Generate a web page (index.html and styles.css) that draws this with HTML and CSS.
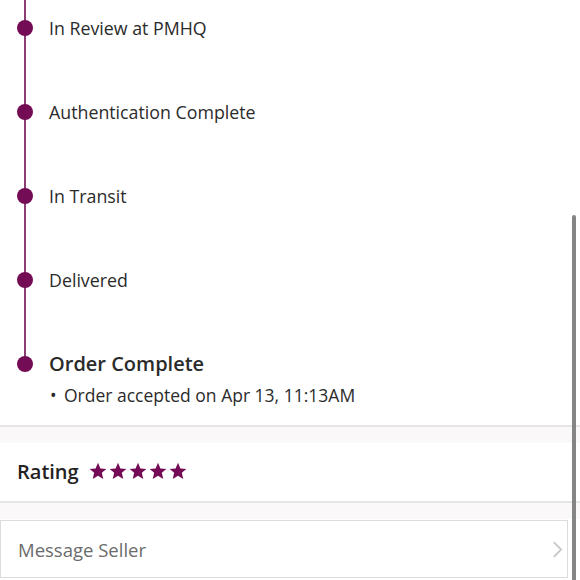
FILE: index.html
```html
<!DOCTYPE html>
<html lang="en">
<head>
  <meta charset="UTF-8">
  <meta name="viewport" content="width=device-width, initial-scale=1.0">
  <title>Order Status</title>
  <link rel="stylesheet" href="styles.css">
</head>
<body>
  <!-- Order timeline -->
  <div class="timeline">
    <div class="step">
      <span class="dot"></span>
      <span class="step-label">In Review at PMHQ</span>
    </div>
    <div class="step">
      <span class="dot"></span>
      <span class="step-label">Authentication Complete</span>
    </div>
    <div class="step">
      <span class="dot"></span>
      <span class="step-label">In Transit</span>
    </div>
    <div class="step">
      <span class="dot"></span>
      <span class="step-label">Delivered</span>
    </div>
    <div class="step last">
      <span class="dot"></span>
      <div>
        <span class="step-label current">Order Complete</span>
        <ul class="step-notes">
          <li>Order accepted on Apr 13, 11:13AM</li>
        </ul>
      </div>
    </div>
  </div>

  <div class="band"></div>

  <!-- Rating -->
  <div class="rating">
    <h3>Rating</h3>
    <div class="stars">
      <svg viewBox="0 0 24 24"><path d="M12 2l2.9 6.9 7.1.6-5.4 4.7 1.7 7.3L12 17.6 5.7 21.5l1.7-7.3L2 9.5l7.1-.6z"/></svg>
      <svg viewBox="0 0 24 24"><path d="M12 2l2.9 6.9 7.1.6-5.4 4.7 1.7 7.3L12 17.6 5.7 21.5l1.7-7.3L2 9.5l7.1-.6z"/></svg>
      <svg viewBox="0 0 24 24"><path d="M12 2l2.9 6.9 7.1.6-5.4 4.7 1.7 7.3L12 17.6 5.7 21.5l1.7-7.3L2 9.5l7.1-.6z"/></svg>
      <svg viewBox="0 0 24 24"><path d="M12 2l2.9 6.9 7.1.6-5.4 4.7 1.7 7.3L12 17.6 5.7 21.5l1.7-7.3L2 9.5l7.1-.6z"/></svg>
      <svg viewBox="0 0 24 24"><path d="M12 2l2.9 6.9 7.1.6-5.4 4.7 1.7 7.3L12 17.6 5.7 21.5l1.7-7.3L2 9.5l7.1-.6z"/></svg>
    </div>
  </div>

  <div class="band"></div>

  <!-- Message seller -->
  <a class="message-seller" href="#">
    <span>Message Seller</span>
    <svg class="chevron" viewBox="0 0 12 20"><path d="M2 2l8 8-8 8"/></svg>
  </a>

  <div class="scrollbar"></div>
</body>
</html>
```

FILE: styles.css
```css
* {
  margin: 0;
  padding: 0;
  box-sizing: border-box;
  font-family: "Open Sans", "Liberation Sans", sans-serif;
}

body {
  background-color: #fff;
  color: #2b2b2b;
  overflow: hidden;
  height: 580px;
}

/* Timeline */
.timeline {
  position: relative;
  padding: 16px 0 18px 17px;
  display: flex;
  flex-direction: column;
  gap: 60px;
  border-bottom: 2px solid #e6e4e5;
}

.timeline::before {
  content: "";
  position: absolute;
  left: 24px;
  top: 0;
  height: 360px;
  width: 2px;
  background-color: #8c3d73;
}

.step {
  display: flex;
  align-items: flex-start;
  gap: 16px;
}

.dot {
  position: relative;
  flex: none;
  width: 16px;
  height: 16px;
  margin-top: 4px;
  border-radius: 50%;
  background-color: #730c55;
}

.step-label {
  display: block;
  font-size: 17.8px;
  line-height: 24px;
}

.step-label.current {
  font-size: 20px;
  font-weight: 600;
}

.step-notes {
  margin-top: 7px;
  list-style: none;
  font-size: 17.5px;
  line-height: 24px;
}

.step-notes li::before {
  content: "\2022";
  display: inline-block;
  width: 14px;
  padding-left: 1px;
}

/* Grey separators */
.band {
  height: 16px;
  background-color: #faf8f9;
}

/* Rating */
.rating {
  height: 60px;
  display: flex;
  align-items: center;
  gap: 9px;
  padding-left: 17px;
  padding-bottom: 2px;
  border-bottom: 2px solid #e6e4e5;
}

.rating h3 {
  font-size: 20px;
  font-weight: 600;
  color: #222;
}

.stars {
  display: flex;
  margin-top: -1px;
}

.stars svg {
  width: 20px;
  height: 20px;
  fill: #730c55;
}

/* Message seller */
.message-seller {
  display: flex;
  align-items: center;
  justify-content: space-between;
  width: 568px;
  height: 58px;
  margin-top: 1px;
  padding: 0 4px 0 17px;
  border: 1px solid #dcdcdc;
  color: #6b6b6b;
  font-size: 18.5px;
  text-decoration: none;
}

.chevron {
  width: 11px;
  height: 19px;
  fill: none;
  stroke: #c8c8c8;
  stroke-width: 2;
}

.scrollbar {
  position: absolute;
  left: 572px;
  top: 215px;
  width: 4px;
  height: 370px;
  border-radius: 2px;
  background-color: #858585;
}
```
